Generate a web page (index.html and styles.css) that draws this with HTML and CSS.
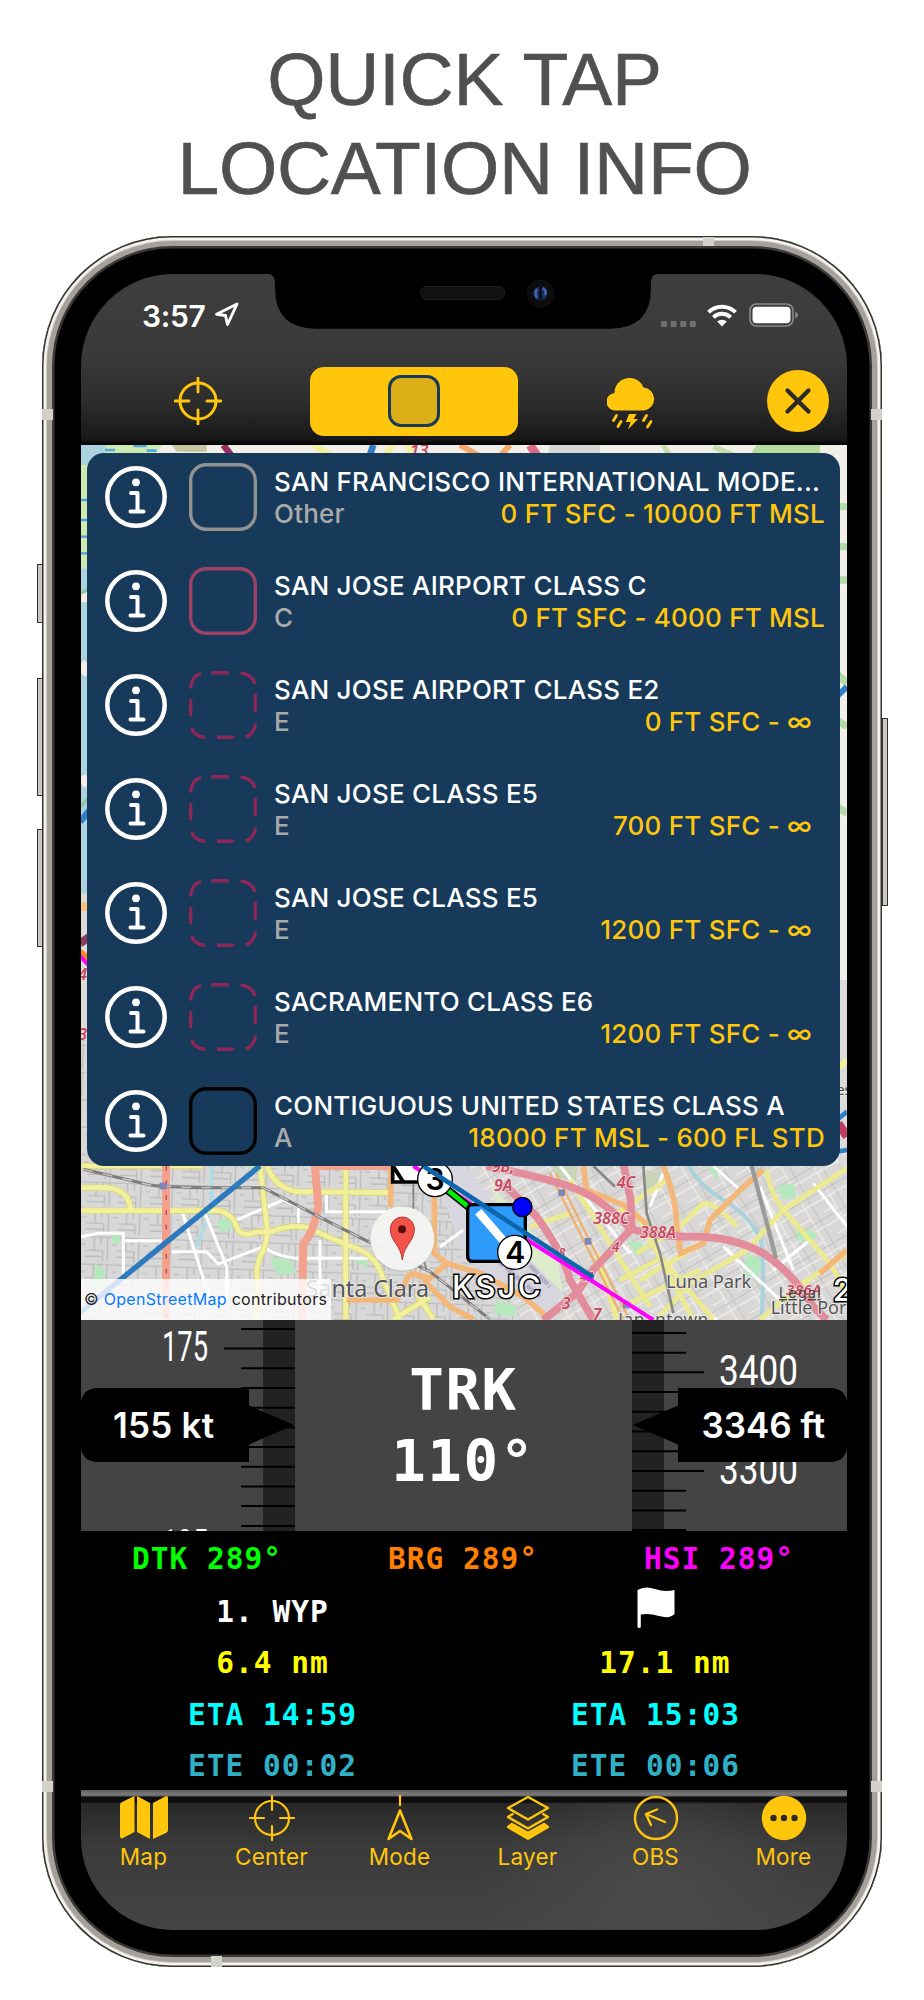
FILE: index.html
```html
<!DOCTYPE html>
<html lang="en">
<head>
    <meta charset="UTF-8">
    <meta name="viewport" content="width=device-width, initial-scale=1.0">
    <title>Quick Tap Location Info</title>
    <link rel="stylesheet" href="styles.css">
</head>
<body>
    <svg class="defs" width="0" height="0">
        <symbol id="info" viewBox="0 0 62 62">
            <circle cx="31" cy="31" r="28.700" fill="none" stroke="#fff" stroke-width="4.500"/>
            <circle cx="31" cy="16.300" r="3.900" fill="#fff"/>
            <path d="M26 27h6.500v18M25.500 45.500h13" fill="none" stroke="#fff" stroke-width="4" stroke-linecap="round" stroke-linejoin="round"/>
        </symbol>
        <symbol id="box" viewBox="0 0 68 68">
            <rect x="1.700" y="1.700" width="64.600" height="64.600" rx="15.500" fill="none" stroke="currentColor" stroke-width="3.400"/>
        </symbol>
        <symbol id="dashed" viewBox="0 0 68 68">
            <path d="M23.500 1.700H38.500M53 2.200Q62.500 4 65.500 11.500M66.300 24V39.500M66.300 54Q64.500 62.500 58 65.500M43.500 66.300H29.500M15 66.300Q6 65 3 58M1.700 44V29.500M1.700 16Q3 6 10.500 3" fill="none" stroke="currentColor" stroke-width="3.400" stroke-linecap="round"/>
        </symbol>
        <symbol id="cross" viewBox="0 0 48 48">
            <circle cx="24" cy="24" r="18" fill="none" stroke="currentColor" stroke-width="3"/>
            <path d="M24 1v14M24 33v14M1 24h14M33 24h14" stroke="currentColor" stroke-width="2.800" stroke-linecap="round"/>
        </symbol>
    </svg>

    <h1>QUICK TAP<br>LOCATION INFO</h1>

    <div class="phone">
        <i class="key mute"></i>
        <i class="key vol-up"></i>
        <i class="key vol-down"></i>
        <i class="key power"></i>
        <i class="band band-l1"></i>
        <i class="band band-r1"></i>
        <i class="band band-l2"></i>
        <i class="band band-r2"></i>
        <i class="band band-top"></i>
        <i class="band band-bottom"></i>

        <div class="screen">
            <svg class="notch" viewBox="0 0 390 56" width="390" height="56">
                <path d="M0 0C5 0 7 4 7 10V14Q7 54.700 48 54.700H342Q383 54.700 383 14V10C383 4 385 0 390 0Z" fill="#000"/>
                <rect x="152.500" y="12.500" width="84" height="13" rx="6.500" fill="#111" stroke="#202020"/>
                <circle cx="272.500" cy="19.500" r="14" fill="#0c0c0e"/>
                <circle cx="272.500" cy="19.500" r="7" fill="#18305e"/>
                <path d="M269 15q-3 4 0 9M275 14q4 3 2 7" stroke="#4560b4" stroke-width="2.500" fill="none"/>
                <path d="M272.500 13v13" stroke="#0b0c18" stroke-width="2.500"/>
            </svg>

            <header class="head">
                <div class="status">
                    <span class="clock">3:57</span>
                    <svg class="locate" viewBox="0 0 25 25" width="25" height="25"><path d="M23 2L2.500 12.200L11.500 13.500L13.500 22.500Z" fill="none" stroke="#fff" stroke-width="2.900" stroke-linejoin="round"/></svg>
                    <svg class="signal" viewBox="0 0 36 6" width="36" height="6"><g fill="#6f6f6f"><rect width="6" height="6" rx="1"/><rect x="9.600" width="6" height="6" rx="1"/><rect x="19.200" width="6" height="6" rx="1"/><rect x="28.800" width="6" height="6" rx="1"/></g></svg>
                    <svg class="wifi" viewBox="0 0 30 23" width="30" height="23"><g fill="none" stroke="#fff" stroke-width="4"><path d="M1.500 8.200A19.200 19.200 0 0 1 28.500 8.200"/><path d="M6.400 13.400A12.200 12.200 0 0 1 23.600 13.400"/></g><path d="M10.200 17.600A7 7 0 0 1 19.800 17.600L15 22.600Z" fill="#fff"/></svg>
                    <svg class="battery" viewBox="0 0 50 24" width="50" height="24"><rect x="1" y="1" width="43" height="22" rx="6.500" fill="none" stroke="#888" stroke-width="1.700"/><rect x="3.500" y="3.700" width="38" height="16.600" rx="4" fill="#fff"/><path d="M46.200 8.500q2.800 1 2.800 3.500t-2.800 3.500z" fill="#888"/></svg>
                </div>
                <div class="modes">
                    <svg class="mode-center" width="48" height="48"><use href="#cross"/></svg>
                    <div class="mode-area"><span></span></div>
                    <svg class="mode-weather" viewBox="0 0 50 53" width="50" height="53" fill="currentColor">
                        <path d="M9 32.500A8.700 8.700 0 0 1 7.500 15A15 15 0 0 1 36.500 9.500A11.600 11.600 0 0 1 37.500 32.500Z"/>
                        <path d="M22 36h7.500l-2.800 5h4.300L21 51.500l2.600-7.500h-4.800z"/>
                        <path d="M9.500 37.500l-3 5M14 43.500l-3 5M39.500 37.500l-3 5M44 43.500l-3.500 5.500" stroke="currentColor" stroke-width="2.800" stroke-linecap="round"/>
                    </svg>
                    <svg class="close" viewBox="0 0 62 62" width="62" height="62"><circle cx="31" cy="31" r="31" fill="#ffc60b"/><path d="M20.500 20.500L41.500 41.500M41.500 20.500L20.500 41.500" stroke="#2a2a2a" stroke-width="4.300" stroke-linecap="round"/></svg>
                </div>
            </header>

            <div class="map">
                <svg class="tiles" viewBox="153 -1785 2298 2625" width="766" height="875">
                    <defs>
                        <pattern id="blocks" width="94" height="82" patternUnits="userSpaceOnUse" patternTransform="rotate(2)">
                            <rect width="94" height="82" fill="#d9d8d8"/>
                            <path d="M0 10H94M0 50H52M26 10V50M66 10V82M52 50V82M0 68H52M80 32H94M46 10V32" stroke="#bcbcbc" stroke-width="4" fill="none"/>
                        </pattern>
                        <pattern id="blocks2" width="86" height="76" patternUnits="userSpaceOnUse" patternTransform="rotate(-30)">
                            <rect width="86" height="76" fill="#d9d8d6"/>
                            <path d="M0 6H86M40 6V76M0 42H40" stroke="#efeeed" stroke-width="4" fill="none"/>
                            <path d="M62 6V76M0 60H86" stroke="#c2c2c2" stroke-width="3"/>
                        </pattern>
                    </defs>
                    <rect x="153" y="-1785" width="2298" height="2625" fill="#f2efe9"/>

                    <!-- top edge -->
                    <rect x="153" y="-1785" width="80" height="60" fill="#aad3df"/>
                    <path d="M230 -1785H400L340 -1725H210Z" fill="#cdebb0"/>
                    <path d="M225 -1770h30M310 -1782h40M350 -1768h30" stroke="#55a8e8" stroke-width="8"/>
                    <path d="M425 -1785H530V-1765H440Z" fill="#c4c59d"/>
                    <path d="M580 -1785L610 -1745" stroke="#9c2c5e" stroke-width="20"/>
                    <path d="M850 -1785L900 -1755M1090 -1785L1050 -1740M1130 -1785L1160 -1740" stroke="#f1f19a" stroke-width="18"/>
                    <path d="M1030 -1785L1015 -1740" stroke="#2f7fc8" stroke-width="20"/>
                    <path d="M1290 -1785L1370 -1740M1440 -1785L1400 -1740" stroke="#f4a96a" stroke-width="18"/>
                    <path d="M1500 -1785L1530 -1740" stroke="#dd6a86" stroke-width="26"/>
                    <path d="M1560 -1785H1710V-1740H1550Z" fill="#d4d4d4"/>
                    <path d="M1900 -1785L1920 -1750M2050 -1780L2110 -1755" stroke="#c5dfab" stroke-width="16"/>
                    <path d="M2180 -1785H2370V-1740H2150Z" fill="#b5dd9d"/>
                    <text x="1140" y="-1752" class="ref" font-size="50">13</text>

                    <!-- left edge -->
                    <rect x="153" y="-1725" width="30" height="310" fill="#cdebb0"/>
                    <path d="M153 -1560h20M153 -1510h20M153 -1460h20M153 -1620h20" stroke="#4aa0e0" stroke-width="7"/>
                    <rect x="153" y="-1415" width="30" height="980" fill="#aad3df"/>
                    <path d="M153 -1330h22M153 -1100l22 -30M153 -770l22 -14" stroke="#f4ece6" stroke-width="34"/>
                    <path d="M153 -1340l22 -12M153 -700l22 -26" stroke="#8ec7a2" stroke-width="10"/>
                    <path d="M150 -655L180 -690" stroke="#2f7fc8" stroke-width="20"/>
                    <rect x="153" y="-440" width="30" height="460" fill="#dcdbda"/>
                    <path d="M153 -400h22M153 240h22" stroke="#f9c27a" stroke-width="26"/>
                    <path d="M150 -290L180 -310" stroke="#8a3a5c" stroke-width="24"/>
                    <path d="M150 -265L180 -240" stroke="#ff8a1e" stroke-width="18"/>
                    <path d="M150 -252L180 -220" stroke="#f0f" stroke-width="12"/>
                    <text x="145" y="-180" class="ref" font-size="48">4</text>
                    <text x="145" y="0" class="ref" font-size="48">3</text>

                    <!-- right edge -->
                    <path d="M2420 -1600H2451M2420 -1480H2451M2420 -1380H2451M2420 -1100L2451 -1070M2420 -960L2451 -940M2420 -700L2451 -680" stroke="#b3dba8" stroke-width="22"/>
                    <path d="M2420 -1030L2451 -1060" stroke="#2f7fc8" stroke-width="18"/>
                    <rect x="2425" y="-180" width="30" height="560" fill="#dcdbda"/>
                    <path d="M2420 90L2451 60" stroke="#f1f19a" stroke-width="18"/>
                    <text x="2420" y="165" font-size="42" fill="#444" class="place">es</text>
                    <path d="M2420 240L2451 215M2420 335L2451 330" stroke="#2f7fc8" stroke-width="14"/>
                    <path d="M2425 250L2451 290" stroke="#c23b62" stroke-width="26"/>

                    <!-- city blocks -->
                    <rect x="153" y="0" width="1330" height="840" fill="url(#blocks)"/>
                    <path d="M1320 370H2451V840H1480L1320 600Z" fill="url(#blocks2)"/>
                    <path d="M1200 378H1310L1440 560L1600 760L1550 820L1480 780L1310 660Z" fill="#d7d5dd"/>
                    <path d="M1380 430L1580 660L1600 760L1440 600Z" fill="#dcebc9"/>
                    <path d="M1300 460L1560 740M1330 600L1530 770M1230 400L1310 500" stroke="#b5afcb" stroke-width="13" stroke-dasharray="36 6"/>
                    <g fill="#b5e8bd">
                        <path d="M560 540l50 -10 10 30 -50 20z"/>
                        <path d="M720 650l60 10 20 40 -60 5z"/>
                        <path d="M245 585h25v25h-25z"/>
                        <path d="M195 670l30 20 -10 50h-25z"/>
                        <path d="M640 375h50l-10 30z"/>
                        <path d="M975 660l30 -10 10 40z"/>
                        <path d="M2240 440l50 -10 10 40 -40 10z"/>
                        <path d="M2150 640l50 20 -20 60 -40 -20z"/>
                        <path d="M1790 600l50 10 -20 40z"/>
                        <path d="M1400 780l60 20 -10 30 -60 -10z"/>
                        <path d="M2300 560l60 20 -10 30 -50 -10z"/>
                        <path d="M2030 380l40 0 -10 40z"/>
                    </g>
                    <g fill="#c9d3b5">
                        <path d="M1570 378h70v45l-60 -10z"/>
                        <path d="M1850 390l40 10 -10 60 -40 -20z"/>
                    </g>
                    <path d="M545 378V500L500 620" stroke="#b2dce4" stroke-width="12" fill="none"/>
                    <path d="M1970 370Q2010 440 2080 480T2190 590Q2205 640 2195 840" stroke="#a9d2dc" stroke-width="12" fill="none"/>

                    <!-- white streets -->
                    <g fill="none" stroke="#fff" stroke-width="9">
                        <path d="M153 590L205 580H280V710M280 602H400M425 635H530L565 672L700 620M455 510L540 780M525 520L590 680V780M620 540L760 480L805 500V555M890 460V515H1080M870 600V800M700 620Q740 650 800 655H1060M1230 620L1300 570"/>
                        <path d="M1590 378L1800 640M1900 400L1860 500M2050 378L2130 450M2190 440L2290 690M2080 620L2250 780M1960 740L2060 840M2230 690L2340 600M2350 430L2451 560"/>
                    </g>

                    <!-- yellow roads, casing first -->
                    <g fill="none" stroke="#d9d676" stroke-width="19">
                        <path d="M153 443H230Q300 450 302 512M153 512H570Q610 525 620 560T680 576H720Q800 545 850 570T960 618Q1040 640 1060 720L1110 838M153 378H520M690 378L712 570Q710 620 690 650Q675 690 683 720L680 838M712 378Q730 440 800 455L1080 458M947 378V838M1090 838L1200 770M1160 760L1210 838"/>
                    </g>
                    <g fill="none" stroke="#f2f09a" stroke-width="14">
                        <path d="M153 443H230Q300 450 302 512M153 512H570Q610 525 620 560T680 576H720Q800 545 850 570T960 618Q1040 640 1060 720L1110 838M153 378H520M690 378L712 570Q710 620 690 650Q675 690 683 720L680 838M712 378Q730 440 800 455L1080 458M947 378V838M1090 838L1200 770M1160 760L1210 838"/>
                    </g>
                    <g fill="none" stroke="#ebea90" stroke-width="15">
                        <path d="M2451 385L2260 510L2150 630L1980 730L1880 838M2210 390Q2220 460 2262 512L2400 670L2451 760M1820 640L1950 560L2020 490Q2060 490 2120 560M1620 420L1860 800M1700 640L1760 838M1820 520L1930 730L1990 838M1900 660L2050 838M1830 720L2000 620M1800 790L2010 690M1770 720L1900 650M1500 560L1620 520M1380 560L1500 640M2190 838L2320 730L2451 640M1760 520L1910 420"/>
                    </g>

                    <!-- orange roads -->
                    <g fill="none" stroke="#f3b779" stroke-width="17">
                        <path d="M1082 378V500M1213 450V640L1250 670L1200 715L1140 700M1250 670L1350 700L1480 770L1560 838M1180 720L1260 800L1330 838M950 780H1100L1140 700"/>
                        <path d="M1660 378L1670 450L1780 495L1860 560M1900 378Q1940 480 1940 560L1952 640L2020 610L2040 540L2130 450L2200 390M2370 700L2451 630"/>
                    </g>
                    <path d="M1560 400L1640 560L1780 838M1578 400L1658 560L1798 838" stroke="#eeb06d" stroke-width="7" fill="none"/>

                    <!-- red trunk roads -->
                    <g fill="none" stroke="#f3a08c" stroke-width="24">
                        <path d="M408 378V838M855 378L865 500Q850 580 820 610L815 838M855 378H1150"/>
                    </g>
                    <path d="M409 378V838" stroke="#b04a52" stroke-width="4" stroke-dasharray="14 30"/>

                    <!-- motorways -->
                    <g fill="none" stroke="#e38c9b" stroke-width="23" stroke-linejoin="round">
                        <path d="M1370 378Q1530 410 1620 440T1800 565Q1870 590 1990 590T2200 640Q2290 700 2350 800L2390 840"/>
                        <path d="M1780 370L1802 480L1805 565L1680 700L1640 760L1540 840"/>
                        <path d="M1420 430L1520 530Q1600 640 1620 720L1690 840"/>
                    </g>

                    <!-- railways -->
                    <g fill="none">
                        <path d="M160 388L360 435Q420 445 700 443L790 490Q960 580 1200 695L1380 838" stroke="#7c7c7c" stroke-width="9"/>
                        <path d="M160 388L360 435Q420 445 700 443L790 490Q960 580 1200 695L1380 838" stroke="#c8c8c8" stroke-width="4" stroke-dasharray="30 30"/>
                        <path d="M1150 430V560L1190 690" stroke="#888" stroke-width="6"/>
                        <path d="M1690 378L1755 440M1840 378L1850 520L1890 640L1930 820" stroke="#888" stroke-width="8"/>
                        <path d="M2163 370L2238 655" stroke="#9a9a9a" stroke-width="13"/>
                    </g>
                    <g fill="#7d85bd">
                        <rect x="389" y="428" width="20" height="20"/>
                        <rect x="1585" y="448" width="20" height="20"/>
                        <rect x="1664" y="594" width="20" height="20"/>
                        <rect x="1779" y="785" width="20" height="20"/>
                    </g>

                    <!-- labels -->
                    <g class="ref" font-size="48">
                        <text x="1385" y="395">9B;</text>
                        <text x="1392" y="452">9A</text>
                        <text x="1760" y="445">4C</text>
                        <text x="1690" y="552" textLength="108">388C</text>
                        <text x="1830" y="594" textLength="108">388A</text>
                        <text x="1585" y="650" font-size="38">8</text>
                        <text x="1745" y="635" font-size="42">4</text>
                        <text x="1650" y="722" font-size="38">4A</text>
                        <text x="1595" y="808">3</text>
                        <text x="1688" y="840">7</text>
                        <text x="2268" y="765" font-size="44" textLength="105">386A</text>
                    </g>
                    <g class="place" fill="#555">
                        <text x="827" y="770" font-size="70" textLength="370">Santa Clara</text>
                        <text x="1908" y="745" font-size="55" textLength="256">Luna Park</text>
                        <text x="2222" y="822" font-size="54">Little Portugal</text>
                        <text x="1765" y="858" font-size="52" textLength="270">Japantown</text>
                    </g>
                    <text x="2247" y="774" class="ui" font-size="42" fill="#444" text-decoration="underline" textLength="125">Legal</text>

                    <!-- flight plan -->
                    <path d="M690 378L150 818" stroke="#2d79bd" stroke-width="16"/>
                    <path d="M1088 350H1180V426H1088Z" fill="#fff" stroke="#000" stroke-width="11"/>
                    <path d="M1090 380L1120 426" stroke="#000" stroke-width="12"/>
                    <path d="M1150 378L1320 490L1870 840" stroke="#f0f" stroke-width="12"/>
                    <path d="M1240 440L1330 512" stroke="#000" stroke-width="24"/>
                    <path d="M1240 440L1330 512" stroke="#0e0" stroke-width="15"/>
                    <circle cx="1215" cy="418" r="52" fill="#fff" stroke="#000" stroke-width="4"/>
                    <text x="1215" y="450" class="ui num">3</text>
                    <rect x="1313" y="494" width="173" height="170" rx="14" fill="#2e9bfb" stroke="#000" stroke-width="10"/>
                    <path d="M1345 515L1420 602" stroke="#fff" stroke-width="25"/>
                    <path d="M1180 378L1690 712" stroke="#0c66ad" stroke-width="14"/>
                    <circle cx="1477" cy="501" r="29" fill="#00f" stroke="#000" stroke-width="4"/>
                    <circle cx="1454" cy="637" r="51" fill="#fff" stroke="#000" stroke-width="4"/>
                    <text x="1456" y="669" class="ui num">4</text>
                    <g class="ui outlined">
                        <text x="1266" y="774" textLength="266">KSJC</text>
                        <text x="2408" y="782">2</text>
                    </g>

                    <!-- dropped pin -->
                    <circle cx="1117" cy="598" r="97" fill="#888" opacity=".35"/>
                    <circle cx="1117" cy="596" r="96" fill="#f8f7f6" opacity=".93"/>
                    <path d="M1117 660C1113 615 1081 605 1081 567A36 36 0 0 1 1153 567C1153 605 1121 615 1117 660Z" fill="#f2534a" stroke="#b8332b" stroke-width="3"/>
                    <circle cx="1116" cy="568" r="12" fill="#5b0d0d"/>
                </svg>

                <div class="credit">© <a>OpenStreetMap</a> contributors</div>

                <div class="panel">
                    <div class="row">
                        <svg class="info"><use href="#info"/></svg>
                        <svg class="zone other"><use href="#box"/></svg>
                        <div class="text">
                            <p class="name">SAN FRANCISCO INTERNATIONAL MODE...</p>
                            <p class="line"><span>Other</span><b>0 FT SFC - 10000 FT MSL</b></p>
                        </div>
                    </div>
                    <div class="row">
                        <svg class="info"><use href="#info"/></svg>
                        <svg class="zone class-c"><use href="#box"/></svg>
                        <div class="text">
                            <p class="name">SAN JOSE AIRPORT CLASS C</p>
                            <p class="line"><span>C</span><b>0 FT SFC - 4000 FT MSL</b></p>
                        </div>
                    </div>
                    <div class="row">
                        <svg class="info"><use href="#info"/></svg>
                        <svg class="zone class-e"><use href="#dashed"/></svg>
                        <div class="text">
                            <p class="name">SAN JOSE AIRPORT CLASS E2</p>
                            <p class="line open"><span>E</span><b>0 FT SFC - ∞</b></p>
                        </div>
                    </div>
                    <div class="row">
                        <svg class="info"><use href="#info"/></svg>
                        <svg class="zone class-e"><use href="#dashed"/></svg>
                        <div class="text">
                            <p class="name">SAN JOSE CLASS E5</p>
                            <p class="line open"><span>E</span><b>700 FT SFC - ∞</b></p>
                        </div>
                    </div>
                    <div class="row">
                        <svg class="info"><use href="#info"/></svg>
                        <svg class="zone class-e"><use href="#dashed"/></svg>
                        <div class="text">
                            <p class="name">SAN JOSE CLASS E5</p>
                            <p class="line open"><span>E</span><b>1200 FT SFC - ∞</b></p>
                        </div>
                    </div>
                    <div class="row">
                        <svg class="info"><use href="#info"/></svg>
                        <svg class="zone class-e"><use href="#dashed"/></svg>
                        <div class="text">
                            <p class="name">SACRAMENTO CLASS E6</p>
                            <p class="line open"><span>E</span><b>1200 FT SFC - ∞</b></p>
                        </div>
                    </div>
                    <div class="row">
                        <svg class="info"><use href="#info"/></svg>
                        <svg class="zone class-a"><use href="#box"/></svg>
                        <div class="text">
                            <p class="name">CONTIGUOUS UNITED STATES CLASS A</p>
                            <p class="line"><span>A</span><b>18000 FT MSL - 600 FL STD</b></p>
                        </div>
                    </div>
                </div>
            </div>

            <div class="gauges">
                <svg class="tape" viewBox="0 0 214 211" width="214" height="211">
                    <rect x="182" width="32" height="211" fill="#222"/>
                    <path d="M160 9H214M143 28.600H214M160 48.300H214M160 68H214M160 87.700H214M160 107.400H214M160 127H214M160 146.700H214M160 166.400H214M160 186H214M160 206H214" stroke="#000" stroke-width="2"/>
                    <text x="81" y="41" class="digits" textLength="46" lengthAdjust="spacingAndGlyphs">175</text>
                    <text x="81" y="239" class="digits" textLength="46" lengthAdjust="spacingAndGlyphs">125</text>
                    <path d="M15 68H168V85.500L213 105L168 124.500V142H15Q2 141 0 128V82Q2 69 15 68Z" fill="#000"/>
                    <text x="32" y="118" class="ui value" textLength="101">155 kt</text>
                </svg>
                <div class="track">
                    <span>TRK</span>
                    <span>110°</span>
                </div>
                <svg class="tape" viewBox="0 0 215 211" width="215" height="211">
                    <rect width="32" height="211" fill="#222"/>
                    <path d="M0 13H54M0 32.700H54M0 52.300H72M0 72H54M0 91.800H54M0 111.500H54M0 131.300H54M0 151H72M0 170.700H54M0 190.500H54M0 210H54" stroke="#000" stroke-width="2"/>
                    <text x="87" y="65" class="digits" textLength="79" lengthAdjust="spacingAndGlyphs">3400</text>
                    <text x="87" y="164" class="digits" textLength="79" lengthAdjust="spacingAndGlyphs">3300</text>
                    <path d="M200 68H46V85.500L1 105L46 124.500V142H200Q213 141 215 128V82Q213 69 200 68Z" fill="#000"/>
                    <text x="69.500" y="118" class="ui value" textLength="123.500">3346 ft</text>
                </svg>
            </div>

            <div class="nav">
                <div class="bearings">
                    <span class="dtk">DTK 289°</span>
                    <span class="brg">BRG 289°</span>
                    <span class="hsi">HSI 289°</span>
                </div>
                <div class="legs">
                    <div class="leg">
                        <span>1. WYP</span>
                        <span class="dist">6.4 nm</span>
                        <span class="eta">ETA 14:59</span>
                        <span class="ete">ETE 00:02</span>
                    </div>
                    <div class="leg">
                        <span class="flag"><svg viewBox="0 0 38 42" width="38" height="42"><path d="M.500 3Q8-1.500 18 2Q28 5.500 37.500 3V27Q33 32 22 29Q12 26 3.800 27.500V39.500Q3.800 41 2 41Q.500 41 .500 39.500Z" fill="#fff"/></svg></span>
                        <span class="dist">&nbsp;17.1 nm</span>
                        <span class="eta">ETA 15:03</span>
                        <span class="ete">ETE 00:06</span>
                    </div>
                </div>
            </div>

            <div class="tabs">
                <div class="tab">
                    <svg viewBox="0 0 48 46" width="48" height="46" fill="currentColor"><path d="M0 10Q0 8 2 7L14.500 1V37L3 43Q0 44.500 0 41ZM17 1L30 8V44L17 37ZM33 8L45 1.500Q48 0 48 3V35Q48 37 46 38L33 44Z"/></svg>
                    Map
                </div>
                <div class="tab">
                    <svg viewBox="0 0 46 46" width="46" height="46" fill="none" stroke="currentColor" stroke-width="2.200"><circle cx="23" cy="23" r="17"/><path d="M23 1v14M23 31v14M1 23h14M31 23h14" stroke-linecap="round"/></svg>
                    Center
                </div>
                <div class="tab">
                    <svg viewBox="0 0 46 46" width="46" height="46" fill="none" stroke="currentColor" stroke-width="2.600" stroke-linejoin="round"><path d="M23 0V11" stroke-width="2.200"/><path d="M23 15.500L34.500 44L23 36L11.500 44Z"/></svg>
                    Mode
                </div>
                <div class="tab">
                    <svg viewBox="0 0 46 46" width="46" height="46" fill="none" stroke="currentColor" stroke-width="2.400" stroke-linejoin="round"><path d="M23 2L43 13L23 24.500L3 13Z"/><path d="M8.500 18.500L3 22L23 33.500L43 22L37.500 18.500"/><path d="M7 29L3 32L23 43.800L43 32L39 29L23 38Z" fill="currentColor"/></svg>
                    Layer
                </div>
                <div class="tab">
                    <svg viewBox="0 0 46 46" width="46" height="46" fill="none" stroke="currentColor" stroke-width="2.400" stroke-linecap="round" stroke-linejoin="round"><circle cx="23" cy="23" r="21"/><path d="M32 27L13 19M24 14.500L13 19L18 30"/></svg>
                    OBS
                </div>
                <div class="tab">
                    <svg viewBox="0 0 46 46" width="46" height="46"><circle cx="23" cy="23" r="22.200" fill="currentColor"/><g fill="#2b2b2b"><circle cx="12.500" cy="23" r="3.200"/><circle cx="23" cy="23" r="3.200"/><circle cx="33.500" cy="23" r="3.200"/></g></svg>
                    More
                </div>
            </div>
        </div>
    </div>
</body>
</html>
```

FILE: styles.css
```css
* {
    box-sizing: border-box;
}
body {
    margin: 0;
    height: 2000px;
    background: #fff;
    font-family: Inter, "Liberation Sans", sans-serif;
    overflow: hidden;
}
svg {
    display: block;
    flex-shrink: 0;
}
p {
    margin: 0;
}
.defs {
    position: absolute;
}
h1 {
    margin: 0;
    padding: 35px 0 0 5px;
    height: 236px;
    font: 400 75px/89px "Liberation Sans", Arial, sans-serif;
    letter-spacing: -0.300px;
    text-align: center;
    color: #505050;
    -webkit-text-stroke: 0.600px #505050;
}

/* phone body */
.phone {
    position: relative;
    width: 840px;
    height: 1731px;
    margin-left: 42px;
    padding: 38px 35px 37px 39px;
    border-radius: 130px;
    background: #000;
    box-shadow: inset 0 0 0 1.5px #33322f, inset 0 0 0 4px #f4f3ee, inset 0 0 0 5px #cfcdc6, inset 0 0 0 10px #a5a19a, inset 0 0 0 12.500px #3c3a38;
}
.key {
    position: absolute;
    width: 6px;
    border: 1.5px solid #33322f;
    background: #c9c8c3;
}
.mute { left: -5px; top: 328px; height: 59px; }
.vol-up { left: -5px; top: 442px; height: 118px; }
.vol-down { left: -5px; top: 593px; height: 118px; }
.power { right: -6px; top: 482px; height: 188px; }
.band {
    position: absolute;
    width: 11px;
    height: 11px;
    background: #d3d2ca;
}
.band-l1 { left: 0; top: 173px; }
.band-r1 { right: 0; top: 173px; }
.band-l2 { left: 0; top: 1545px; }
.band-r2 { right: 0; top: 1545px; }
.band-top { left: 661px; top: 1px; height: 9px; }
.band-bottom { left: 169px; bottom: 0; }

.screen {
    position: relative;
    display: flex;
    flex-direction: column;
    width: 766px;
    height: 1656px;
    border-radius: 92px;
    background: #000;
    overflow: hidden;
}
.notch {
    position: absolute;
    left: 187px;
    top: 0;
}

/* status and mode bar */
.head {
    height: 171px;
    background: linear-gradient(#3e3e3e, #3a3a3a 45%, #2d2d2d 75%, #171717 97%, #000);
    color: #ffc60b;
}
.status {
    display: flex;
    align-items: flex-end;
    height: 53px;
    padding-left: 61px;
}
.clock {
    width: 72px;
    font-size: 30px;
    font-weight: 600;
    line-height: 22px;
    letter-spacing: -0.300px;
    color: #fff;
}
.signal { margin-left: 422px; }
.wifi { margin-left: 10px; }
.battery { margin-left: 12px; }
.modes {
    display: flex;
    align-items: center;
    height: 70px;
    margin-top: 39px;
    padding-left: 93px;
}
.mode-area {
    display: flex;
    align-items: center;
    justify-content: center;
    width: 208px;
    height: 69px;
    margin-left: 88px;
    border-radius: 14px;
    background: #ffc60b;
}
.mode-area span {
    width: 52px;
    height: 52px;
    border: 3px solid #173a5a;
    border-radius: 13px;
    background: #dcae18;
}
.mode-weather {
    margin: 6px 0 0 89px;
}
.close {
    margin-left: 110px;
}

/* map with the airspace list over it */
.map {
    position: relative;
    height: 875px;
}
.ui {
    font-family: Inter, sans-serif;
}
.place {
    font-family: "Noto Sans", sans-serif;
    stroke: #ececec;
    stroke-width: 5px;
    paint-order: stroke;
}
.ref {
    font-family: "Noto Sans", sans-serif;
    font-style: italic;
    font-weight: 600;
    fill: #c5475c;
    stroke: #f0dede;
    stroke-width: 5px;
    paint-order: stroke;
}
.num {
    font-size: 90px;
    font-weight: 600;
    text-anchor: middle;
}
.outlined {
    font-size: 94px;
    font-weight: 500;
    fill: #fff;
    stroke: #000;
    stroke-width: 9px;
    paint-order: stroke;
}
.credit {
    position: absolute;
    left: 0;
    bottom: 0;
    width: 250px;
    height: 41px;
    padding-left: 3px;
    background: rgba(255, 255, 255, 0.8);
    font-size: 16px;
    line-height: 40px;
    letter-spacing: 0.300px;
    white-space: nowrap;
    color: #222;
}
.credit a {
    color: #0a7aff;
}
.panel {
    position: absolute;
    left: 6px;
    top: 8px;
    display: flex;
    flex-direction: column;
    gap: 16px;
    width: 753px;
    height: 713px;
    border-radius: 17px;
    background: #173a5a;
}
.row {
    display: flex;
    align-items: center;
    height: 88px;
    padding: 0 15px 0 18px;
}
.info {
    width: 62px;
    height: 62px;
}
.zone {
    width: 68px;
    height: 68px;
    margin: 0 17px 0 22px;
}
.other { color: #929292; }
.class-c { color: #9e4265; }
.class-e { color: #8e2658; }
.class-a { color: #000; }
.text {
    flex: 1;
    padding-top: 2px;
    font-size: 26px;
    font-weight: 550;
    line-height: 32px;
    letter-spacing: 0.220px;
    white-space: nowrap;
    color: #fff;
}
.line {
    display: flex;
    justify-content: space-between;
    color: #aaa;
}
.line b {
    font-weight: 550;
    color: #ffc60b;
}
.open {
    padding-right: 13px;
}

/* speed tape, track, altitude tape */
.gauges {
    display: flex;
    height: 211px;
    background: #444;
}
.digits {
    font-family: Roboto, sans-serif;
    font-size: 42px;
    font-weight: 400;
    fill: #fff;
}
.value {
    font-size: 35px;
    font-weight: 600;
    fill: #fff;
}
.track {
    flex: 1;
    display: flex;
    flex-direction: column;
    align-items: center;
    padding-top: 36px;
    font: 700 57.500px/70.500px "DejaVu Sans Mono", monospace;
    letter-spacing: 1.500px;
    color: #fff;
}

/* navigation data */
.nav {
    height: 259px;
    padding-top: 2px;
    font: 700 29.500px/51.300px "DejaVu Sans Mono", monospace;
    letter-spacing: 1px;
    color: #fff;
}
.bearings {
    display: grid;
    grid-template-columns: repeat(3, 256px);
    height: 54px;
    text-align: center;
    padding-top: 1px;
    margin-left: -2px;
}
.legs {
    display: grid;
    grid-template-columns: 1fr 1fr;
}
.leg {
    display: flex;
    flex-direction: column;
    align-items: center;
}
.leg span {
    height: 51.300px;
}
.dtk { color: #0f0; }
.brg { color: #ff8000; }
.hsi { color: #f0f; }
.dist { color: #ff0; }
.eta { color: #0ff; }
.ete { color: #30b0c7; }

/* bottom tab bar */
.tabs {
    display: grid;
    grid-template-columns: repeat(6, 128px);
    height: 140px;
    padding-top: 5px;
    background:
        linear-gradient(#5e5e5e, #7a7a7a 4px, #666 6px, #0c0c0c 7px, #101010 10px, #050505 11px, transparent 14px),
        radial-gradient(circle at 75% 80%, #4a4a4a, transparent 30%),
        linear-gradient(#222, #3a3a3a 55px, #444);
    color: #ffc60b;
}
.tab {
    display: flex;
    flex-direction: column;
    align-items: center;
    margin-left: -3px;
    font-size: 22.500px;
    line-height: 32px;
    letter-spacing: 0.200px;
}
```
